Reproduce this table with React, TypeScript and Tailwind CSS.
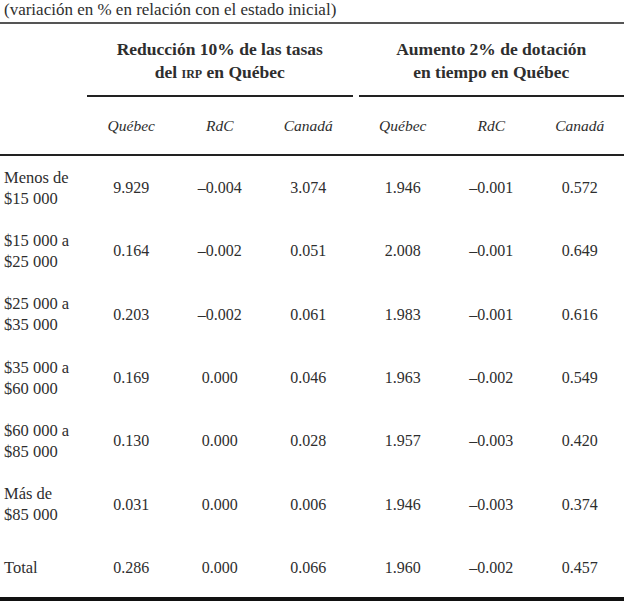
const rows: { label: [string, string]; values: string[] }[] = [
  { label: ["Menos de", "$15 000"], values: ["9.929", "–0.004", "3.074", "1.946", "–0.001", "0.572"] },
  { label: ["$15 000 a", "$25 000"], values: ["0.164", "–0.002", "0.051", "2.008", "–0.001", "0.649"] },
  { label: ["$25 000 a", "$35 000"], values: ["0.203", "–0.002", "0.061", "1.983", "–0.001", "0.616"] },
  { label: ["$35 000 a", "$60 000"], values: ["0.169", "0.000", "0.046", "1.963", "–0.002", "0.549"] },
  { label: ["$60 000 a", "$85 000"], values: ["0.130", "0.000", "0.028", "1.957", "–0.003", "0.420"] },
  { label: ["Más de", "$85 000"], values: ["0.031", "0.000", "0.006", "1.946", "–0.003", "0.374"] },
  { label: ["Total", ""], values: ["0.286", "0.000", "0.066", "1.960", "–0.002", "0.457"] },
]

const cols = "grid grid-cols-[87px_1fr_1fr_1fr_6px_1fr_1fr_1fr]"

function Cells({ values }: { values: string[] }) {
  return (
    <>
      {values.slice(0, 3).map((v, i) => (
        <div key={"a" + i} className="flex items-center justify-center">{v}</div>
      ))}
      <div />
      {values.slice(3).map((v, i) => (
        <div key={"b" + i} className="flex items-center justify-center">{v}</div>
      ))}
    </>
  )
}

export default function App() {
  return (
    <div className="w-[624px] h-[601px] overflow-hidden bg-white text-[#2e2e2e] font-['Liberation_Serif',serif] text-[16px]">
      <div className="h-[22px] pl-[4px] text-[17px] leading-[20px]">
        (variación en % en relación con el estado inicial)
      </div>
      <div className="h-[2px] bg-[#555]" />

      <div className={`${cols} h-[71px] font-bold leading-[23px] text-[17.5px]`}>
        <div />
        <div className="col-span-3 flex flex-col items-center justify-center pt-[2px]">
          <span>Reducción 10% de las tasas</span>
          <span>
            del <span className="[font-variant:small-caps]">irp</span> en Québec
          </span>
        </div>
        <div />
        <div className="col-span-3 flex flex-col items-center justify-center pt-[2px]">
          <span>Aumento 2% de dotación</span>
          <span>en tiempo en Québec</span>
        </div>
      </div>

      <div className={`${cols} h-[2px]`}>
        <div />
        <div className="col-span-3 bg-[#222]" />
        <div />
        <div className="col-span-3 bg-[#222]" />
      </div>

      <div className={`${cols} h-[57px] italic text-[15.5px] pt-[1px]`}>
        <div />
        <Cells values={["Québec", "RdC", "Canadá", "Québec", "RdC", "Canadá"]} />
      </div>

      <div className="h-[2px] bg-[#222]" />

      <div className="flex flex-col">
        {rows.map((r) => (
          <div key={r.label[0]} className={`${cols} h-[63.3px] leading-[21px]`}>
            <div className="flex flex-col justify-center pl-[4px] text-[16.5px]">
              <span>{r.label[0]}</span>
              {r.label[1] && <span>{r.label[1]}</span>}
            </div>
            <Cells values={r.values} />
          </div>
        ))}
      </div>

      <div className="h-[4px] -mt-[2px] bg-[#111]" />
    </div>
  )
}
